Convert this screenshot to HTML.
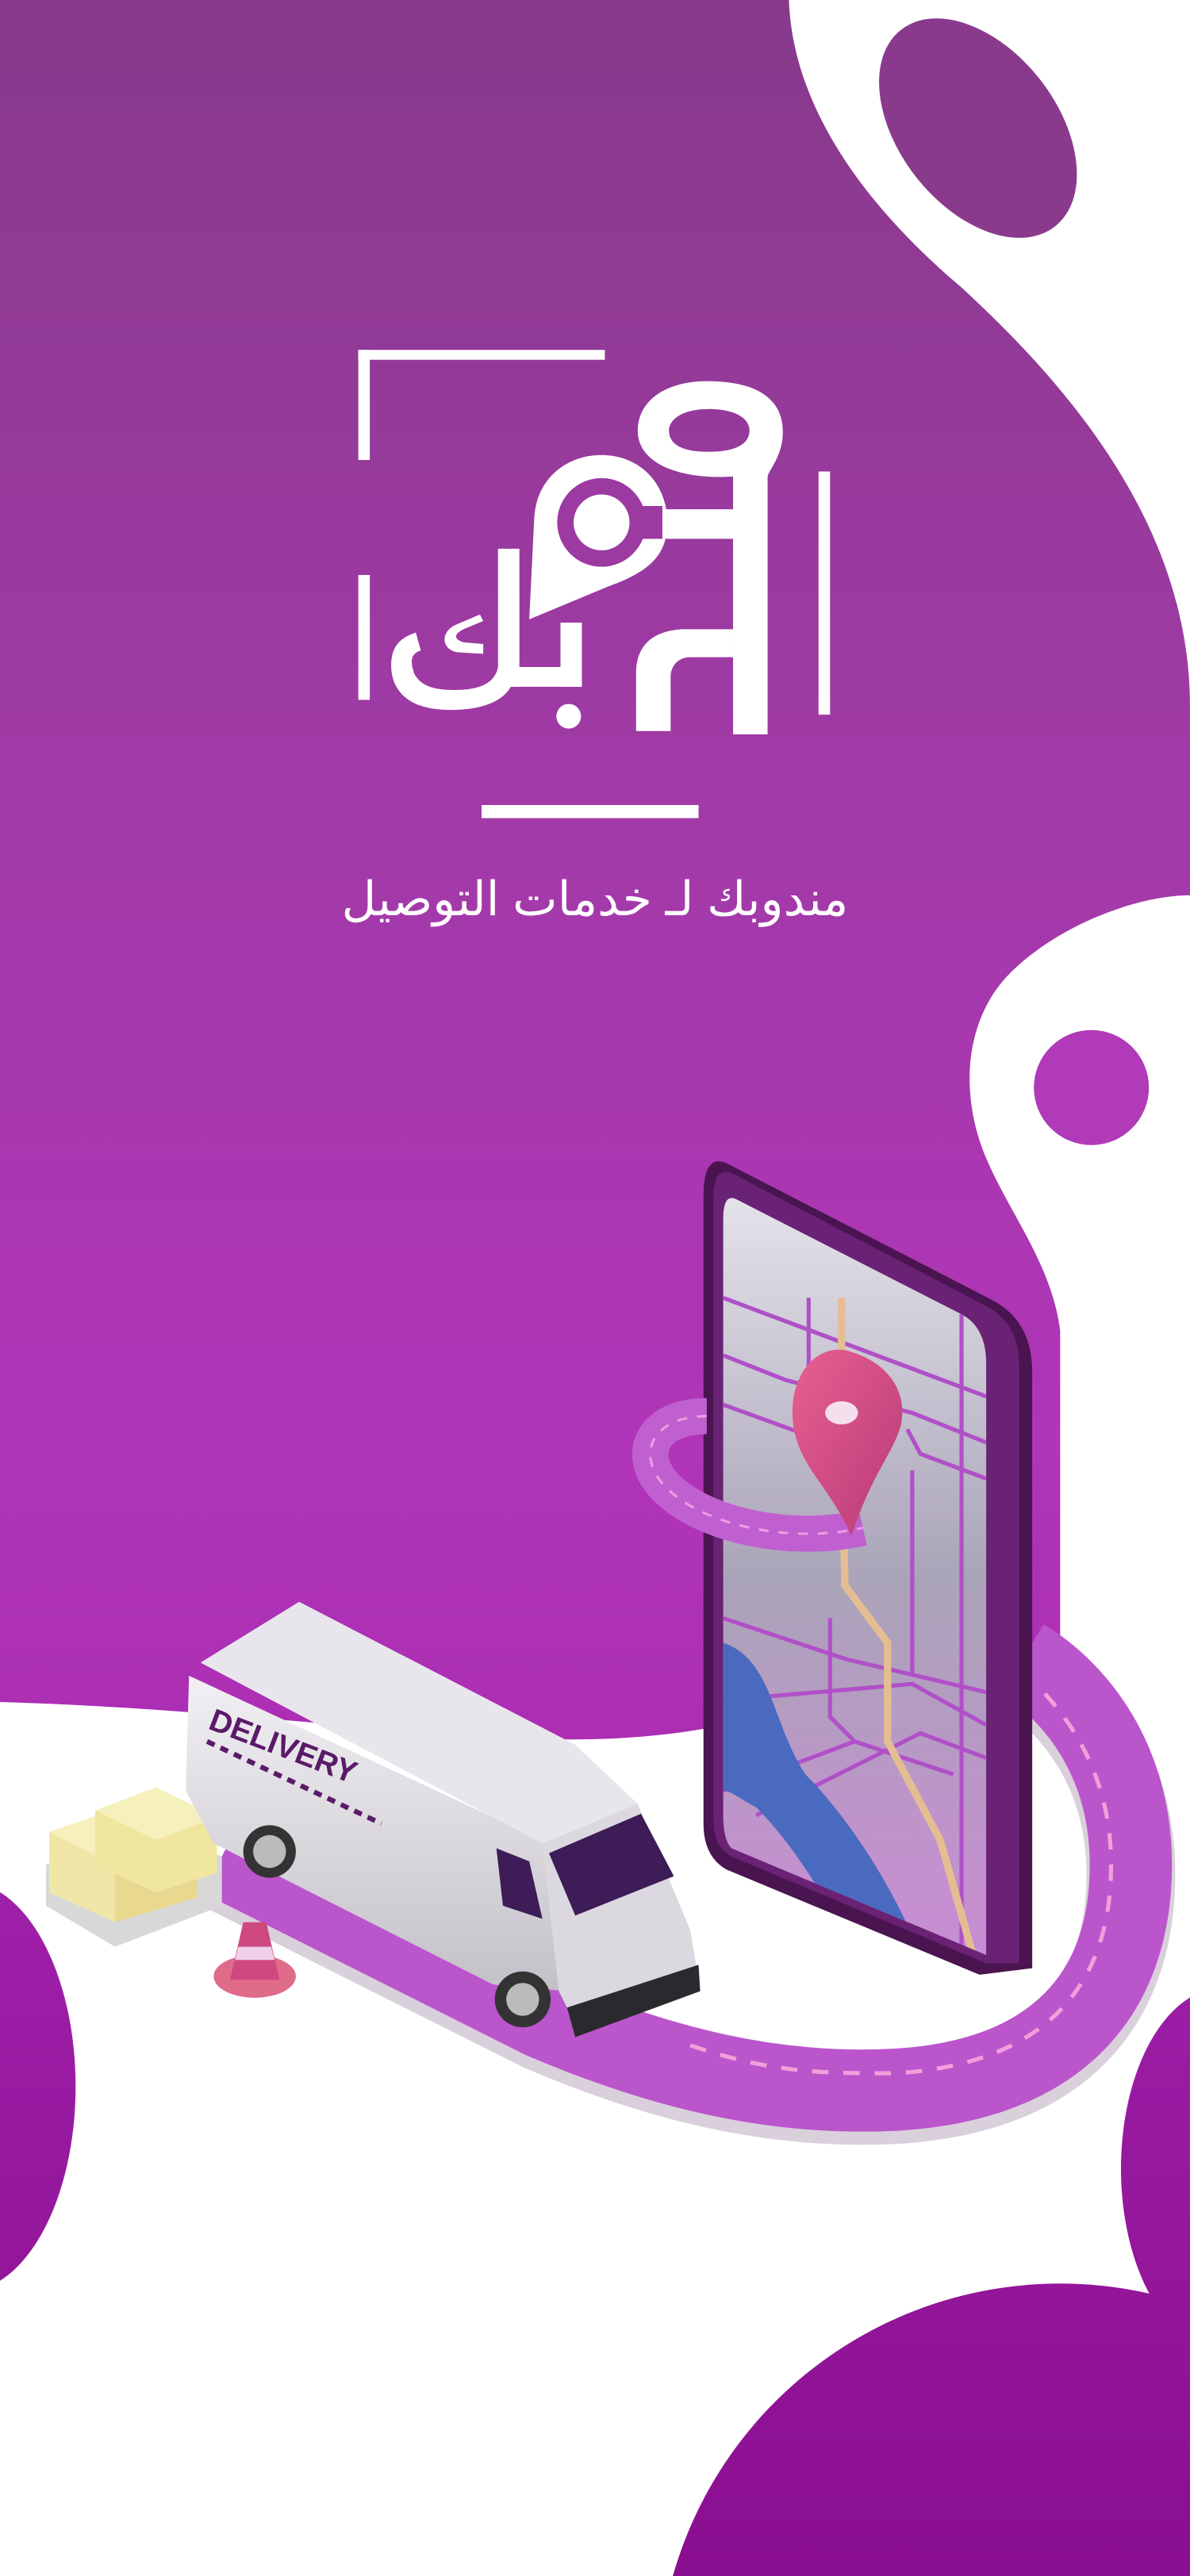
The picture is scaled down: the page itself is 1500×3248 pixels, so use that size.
<!DOCTYPE html>
<html><head><meta charset="utf-8"><style>
html,body{margin:0;padding:0;background:#fff;width:1500px;height:3248px;overflow:hidden;}
svg{display:block;}
</style></head><body>
<svg width="1500" height="3248" viewBox="0 0 724 1568" preserveAspectRatio="none" xmlns="http://www.w3.org/2000/svg">
<defs>
<linearGradient id="bg" gradientUnits="userSpaceOnUse" x1="0" y1="0" x2="0" y2="1100">
<stop offset="0" stop-color="#873a8b"/><stop offset="0.45" stop-color="#a23aa8"/><stop offset="0.8" stop-color="#b035b8"/><stop offset="1" stop-color="#aa2cb2"/>
</linearGradient>
<linearGradient id="blob" gradientUnits="userSpaceOnUse" x1="0" y1="1100" x2="0" y2="1568">
<stop offset="0" stop-color="#a222ac"/><stop offset="1" stop-color="#8a0e90"/>
</linearGradient>
<linearGradient id="scr" x1="0" y1="0" x2="0" y2="1">
<stop offset="0" stop-color="#e4e2ea"/><stop offset="0.5" stop-color="#aaa4b8"/><stop offset="1" stop-color="#c98cd4"/>
</linearGradient>
<linearGradient id="van" x1="0" y1="0" x2="0" y2="1">
<stop offset="0" stop-color="#f2f0f4"/><stop offset="1" stop-color="#c4c0c8"/>
</linearGradient>
<linearGradient id="pin" x1="0" y1="0" x2="1" y2="1">
<stop offset="0" stop-color="#e86090"/><stop offset="1" stop-color="#b83a78"/>
</linearGradient>
<clipPath id="sc"><path d="M448,730 L585,800 Q600,808 600,830 L600,1190 L445,1125 Q440,1120 440,1105 L440,742 Q440,726 448,730 Z"/></clipPath>
</defs>
<rect width="724" height="1568" fill="#fff"/>
<path d="M0,0 L480,0 C482,60 520,120 585,175 C650,235 724,320 724,430 L724,545 C690,545 640,565 612,595 C585,625 585,670 600,705 C615,740 640,770 645,810 L645,1000 L430,1052 C320,1072 200,1042 0,1036 Z" fill="url(#bg)"/>
<ellipse cx="595" cy="78" rx="76" ry="48" transform="rotate(52 595 78)" fill="#8a3a8c"/>
<circle cx="664" cy="662" r="35" fill="#b03ab8"/>
<ellipse cx="-22" cy="1270" rx="68" ry="125" fill="url(#blob)"/>
<ellipse cx="744" cy="1320" rx="62" ry="110" fill="url(#blob)"/>
<circle cx="645" cy="1635" r="245" fill="url(#blob)"/>

<!-- logo -->
<g fill="#fff">
<rect x="218" y="213" width="150" height="6"/>
<rect x="218" y="213" width="7" height="67"/>
<rect x="218" y="350" width="7" height="76"/>
<rect x="498" y="287" width="7" height="148"/>
<rect x="293" y="490" width="132" height="8"/>
<path d="M430,232 C470,232 478,250 476,268 C474,280 468,286 467,290 L467,447 L446,447 L446,328 L405,328 L405,310 L446,310 L446,290 C420,292 388,285 388,262 C388,244 405,232 430,232 Z M431,249 C414,249 407,256 407,262 C407,270 414,275 431,275 C448,275 456,270 456,262 C456,255 448,249 431,249 Z" fill-rule="evenodd"/>
<path d="M387,445 L387,410 C387,392 398,384 415,383 L446,383 L446,400 L420,400 C412,400 408,406 408,412 L408,445 Z"/>
<path d="M366,277 C389,277 406,294 406,318 C406,338 395,348 370,357 L322,377 L325,316 C326,292 344,277 366,277 Z" />
<circle cx="366" cy="318" r="27" fill="#9c3aa2"/>
<circle cx="366" cy="318" r="17"/>
<rect x="389" y="308" width="14" height="20" fill="#9c3aa2"/>
<rect x="303" y="334" width="13" height="84"/>
<rect x="303" y="406" width="51" height="12"/>
<rect x="341" y="379" width="13" height="39"/>
<path d="M313,412 C310,428 290,433 270,432 C248,431 238,420 238,405 C238,393 244,388 253,385 L256,396 C249,398 250,404 252,410 C256,418 265,420 276,420 C292,420 301,416 303,406 Z"/>
<path d="M294,378 L282,383 C276,386 276,389 282,391 L294,392 L294,398 L278,397 C268,395 268,384 278,380 L292,374 Z"/>
<circle cx="346" cy="436" r="7.5"/>
</g>
<text x="362" y="557" text-anchor="middle" font-family="'Liberation Sans','Noto Sans CJK SC','DejaVu Sans',sans-serif" font-size="29" fill="#fff">مندوبك لـ خدمات التوصيل</text>

<!-- road -->
<path d="M135,1130 L330,1228 C400,1258 470,1276 545,1272 C645,1266 688,1212 688,1135 C688,1072 655,1030 622,1010" fill="none" stroke="#d9d0dc" stroke-width="54" transform="translate(0,6)"/>
<path d="M135,1130 L330,1228 C400,1258 470,1276 545,1272 C645,1266 688,1212 688,1135 C688,1072 655,1030 622,1010" fill="none" stroke="#bb55cc" stroke-width="50"/>
<path d="M420,1245 C470,1262 500,1262 545,1262 C640,1256 676,1205 676,1135 C676,1080 650,1045 630,1025" fill="none" stroke="#f0a0d8" stroke-width="2.5" stroke-dasharray="10 9"/>

<!-- phone -->
<path d="M442,708 L605,792 Q628,805 628,835 L628,1198 L596,1202 L442,1138 Q428,1130 428,1110 L428,728 Q428,702 442,708 Z" fill="#4a1450"/>
<path d="M445,714 L600,795 Q620,806 620,830 L620,1195 L600,1195 L445,1130 Q434,1124 434,1108 L434,730 Q434,710 445,714 Z" fill="#6a2275"/>
<path d="M448,730 L585,800 Q600,808 600,830 L600,1190 L445,1125 Q440,1120 440,1105 L440,742 Q440,726 448,730 Z" fill="url(#scr)"/>
<g clip-path="url(#sc)" fill="none" stroke="#b050c8" stroke-width="2.5">
<path d="M440,790 L600,850"/><path d="M440,825 L478,840 L555,860 L600,878"/><path d="M440,855 L495,875"/>
<path d="M492,790 L492,872"/><path d="M600,900 L560,885 L552,870"/>
<path d="M440,985 L515,1010 L600,1030"/><path d="M440,1035 L555,1025 L600,1050"/>
<path d="M555,895 L555,1020"/><path d="M585,800 L585,1190"/>
<path d="M505,985 L505,1045 L520,1060 L580,1080"/><path d="M460,1105 L560,1055 L600,1070"/>
<path d="M440,1090 L520,1060"/>
</g>
<g clip-path="url(#sc)">
<path d="M440,1000 C470,1010 470,1050 490,1080 C510,1100 540,1140 560,1190 L520,1190 C500,1150 480,1120 460,1100 C450,1095 445,1090 440,1090 Z" fill="#4a6ac0"/>
<path d="M512,790 L512,855 L514,965 L540,1000 L540,1060 L572,1120 L592,1190" fill="none" stroke="#e4be92" stroke-width="4.5"/>
</g>
<path d="M430,862 C395,862 385,888 408,908 C430,928 480,940 525,930" fill="none" stroke="#c060d0" stroke-width="22"/>
<path d="M430,862 C395,862 385,888 408,908 C430,928 480,940 525,930" fill="none" stroke="#ec9ce0" stroke-width="1.5" stroke-dasharray="6 6"/>
<path d="M515,822 C538,828 553,845 548,868 C543,885 530,898 518,935 C505,905 488,895 483,870 C478,840 495,818 515,822 Z" fill="url(#pin)"/>
<ellipse cx="512" cy="860" rx="10" ry="7" fill="#f4e0ec"/>

<!-- boxes -->
<path d="M28,1160 L70,1185 L135,1160 L135,1130 L90,1112 L28,1135 Z" fill="#d8d8d8"/>
<path d="M30,1115 L70,1135 L70,1170 L30,1152 Z" fill="#efe6a8"/>
<path d="M70,1135 L120,1120 L120,1155 L70,1170 Z" fill="#e8d890"/>
<path d="M30,1115 L80,1098 L120,1120 L70,1135 Z" fill="#f6f0bc"/>
<path d="M58,1102 L95,1088 L132,1106 L132,1140 L95,1152 L58,1135 Z" fill="#f0e6a0"/>
<path d="M58,1102 L95,1088 L132,1106 L95,1120 Z" fill="#f6f0bc"/>
<!-- cone -->
<ellipse cx="155" cy="1203" rx="25" ry="13" fill="#e06a8a"/>
<path d="M148,1170 L162,1170 L170,1205 L140,1205 Z" fill="#d04880"/>
<path d="M145,1185 L165,1185 L167,1193 L143,1193 Z" fill="#f0d0e8"/>

<!-- van -->
<path d="M115,1020 L330,1120 L345,1212 L300,1208 L130,1122 L113,1090 Z" fill="url(#van)"/>
<path d="M122,1012 L182,975 L350,1062 L388,1098 L330,1122 Z" fill="#e8e6ec"/>
<path d="M330,1122 L388,1098 L420,1175 L425,1205 L350,1232 L340,1212 Z" fill="#dcd8e0"/>
<path d="M334,1128 L390,1104 L410,1142 L350,1166 Z" fill="#3e1c58"/>
<path d="M302,1125 L322,1133 L330,1168 L306,1160 Z" fill="#3e1c58"/>
<path d="M345,1222 L425,1196 L426,1212 L350,1240 Z" fill="#2a2a2e"/>
<circle cx="164" cy="1127" r="16" fill="#333"/><circle cx="164" cy="1127" r="10" fill="#bbb"/>
<circle cx="318" cy="1217" r="17" fill="#333"/><circle cx="318" cy="1217" r="10" fill="#bbb"/>
<text x="0" y="0" transform="translate(126,1052) rotate(21)" font-family="'Liberation Sans',sans-serif" font-weight="bold" font-size="19" fill="#5a1a68">DELIVERY</text>
<path d="M126,1060 L232,1110" stroke="#5a1a68" stroke-width="3" stroke-dasharray="5 4"/>
</svg>
</body></html>
